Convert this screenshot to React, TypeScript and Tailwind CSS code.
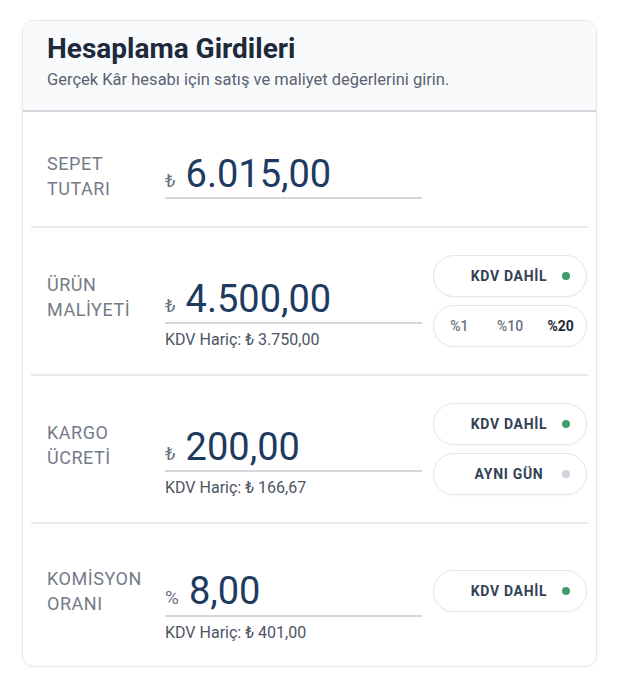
import React from 'react';

const font = { fontFamily: 'Roboto, "Noto Sans", sans-serif' };

const RowLabel = ({ lines, shift = '' }: { lines: string[]; shift?: string }) => (
    <div className={`w-[118px] shrink-0 text-[18px] leading-[25px] tracking-[0.03em] text-[#747b88] ${shift}`}>
        {lines.map((l) => (
            <div key={l}>{l}</div>
        ))}
    </div>
);

const Field = ({ symbol, value, sub }: { symbol: string; value: string; sub?: string }) => (
    <div className={`w-[257px] shrink-0 flex flex-col ${sub ? 'pt-[25px]' : ''}`}>
        <div className="flex items-baseline gap-[10px] border-b-2 border-[#d4d7dd] pb-[2px]">
            <span className="text-[19px] text-[#6b7280]">{symbol}</span>
            <span className="text-[38px] leading-[42px] text-[#1e3a5f]">{value}</span>
        </div>
        {sub && <div className="mt-[6px] text-[16px] leading-[19px] text-[#4b5563]">{sub}</div>}
    </div>
);

const Pill = ({ label, active }: { label: string; active: boolean }) => (
    <div className="h-[42px] flex items-center rounded-full border-[1.5px] border-[#e5e7eb] bg-white pl-4 pr-4 shadow-[0_1px_2px_rgba(0,0,0,0.04)]">
        <span className="flex-1 text-center pl-[6px] text-[14px] font-bold tracking-[0.05em] text-[#334155]">{label}</span>
        <span className={`w-2 h-2 rounded-full ${active ? 'bg-[#3f9d6b]' : 'bg-[#cfd3da]'}`} />
    </div>
);

const RatePill = () => (
    <div className="h-[42px] grid grid-cols-3 items-center rounded-full border-[1.5px] border-[#e5e7eb] bg-white text-[14px] shadow-[0_1px_2px_rgba(0,0,0,0.04)]">
        <span className="text-center font-medium text-[#6b7280]">%1</span>
        <span className="text-center font-medium text-[#6b7280]">%10</span>
        <span className="text-center font-bold text-[#1f2937]">%20</span>
    </div>
);

const Divider = () => <div className="mx-2 h-[2px] bg-[#e8eaee]" />;

export default function App() {
    return (
        <div className="min-h-screen bg-white px-[22px] pt-5" style={font}>
            <div className="rounded-xl border border-[#e5e7eb] bg-white overflow-hidden pb-[5px] shadow-[0_1px_3px_rgba(0,0,0,0.04)]">
                {/* Header */}
                <div className="bg-[#f8fafc] border-b-2 border-[#d6d9de] px-6 pt-[12px] pb-[20px]">
                    <h2 className="text-[28px] leading-[32px] font-bold text-[#1e293b]">Hesaplama Girdileri</h2>
                    <p className="mt-1 text-[16.5px] leading-[21px] text-[#5b6270]">
                        Gerçek Kâr hesabı için satış ve maliyet değerlerini girin.
                    </p>
                </div>

                {/* Sepet */}
                <div className="h-[114px] flex items-center pl-6 pr-[9px] pt-[14px]">
                    <RowLabel lines={['SEPET', 'TUTARI']} />
                    <Field symbol="₺" value="6.015,00" />
                </div>
                <Divider />

                {/* Ürün maliyeti */}
                <div className="h-[146px] flex items-center pl-6 pr-[9px]">
                    <RowLabel lines={['ÜRÜN', 'MALİYETİ']} shift="-mt-2" />
                    <Field symbol="₺" value="4.500,00" sub="KDV Hariç: ₺ 3.750,00" />
                    <div className="ml-[11px] w-[154px] flex flex-col gap-2">
                        <Pill label="KDV DAHİL" active />
                        <RatePill />
                    </div>
                </div>
                <Divider />

                {/* Kargo */}
                <div className="h-[146px] flex items-center pl-6 pr-[9px]">
                    <RowLabel lines={['KARGO', 'ÜCRETİ']} shift="-mt-2" />
                    <Field symbol="₺" value="200,00" sub="KDV Hariç: ₺ 166,67" />
                    <div className="ml-[11px] w-[154px] flex flex-col gap-2">
                        <Pill label="KDV DAHİL" active />
                        <Pill label="AYNI GÜN" active={false} />
                    </div>
                </div>
                <Divider />

                {/* Komisyon */}
                <div className="h-[137px] flex items-center pl-6 pr-[9px] pt-[2px]">
                    <RowLabel lines={['KOMİSYON', 'ORANI']} shift="-mt-[5px]" />
                    <Field symbol="%" value="8,00" sub="KDV Hariç: ₺ 401,00" />
                    <div className="ml-[11px] w-[154px] flex flex-col gap-2 -mt-[5px]">
                        <Pill label="KDV DAHİL" active />
                    </div>
                </div>
            </div>
        </div>
    );
}
